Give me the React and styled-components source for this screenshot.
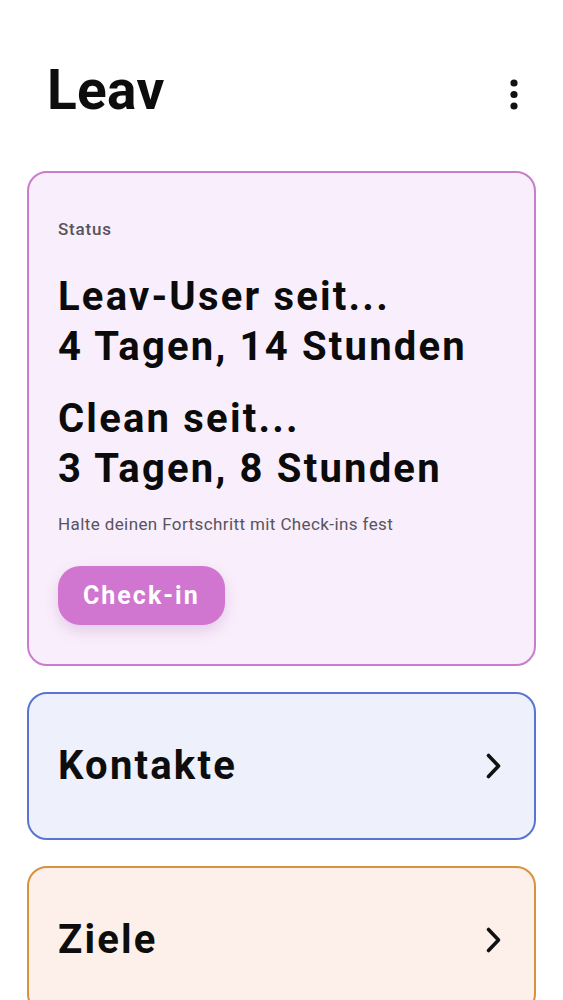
import styled, { createGlobalStyle } from "styled-components";

const GlobalStyle = createGlobalStyle`
  * {
    box-sizing: border-box;
  }
  body {
    margin: 0;
    background: #ffffff;
    font-family: Roboto, "Noto Sans", sans-serif;
    color: #0d0d0d;
  }
`;

const sections = [
  { title: "Kontakte", border: "#5a74d2", bg: "#eef0fc" },
  { title: "Ziele", border: "#d8923f", bg: "#fdf0ea" },
];

const App = () => {
  return (
    <Page>
      <GlobalStyle />
      <Header>
        <Title>Leav</Title>
        <MenuButton aria-label="Menü">
          <svg width="10" height="32" viewBox="0 0 10 32">
            <circle cx="5" cy="5" r="3.6" fill="#111" />
            <circle cx="5" cy="16.5" r="3.6" fill="#111" />
            <circle cx="5" cy="28" r="3.6" fill="#111" />
          </svg>
        </MenuButton>
      </Header>

      <Cards>
        <StatusCard>
          <Label>Status</Label>
          <Headline>
            Leav-User seit...
            <br />
            4 Tagen, 14 Stunden
          </Headline>
          <Headline $second>
            Clean seit...
            <br />
            3 Tagen, 8 Stunden
          </Headline>
          <Hint>Halte deinen Fortschritt mit Check-ins fest</Hint>
          <CheckIn>Check-in</CheckIn>
        </StatusCard>

        {sections.map((s) => (
          <NavCard key={s.title} $border={s.border} $bg={s.bg}>
            <NavTitle>{s.title}</NavTitle>
            <svg width="18" height="28" viewBox="0 0 18 28">
              <path
                d="M3.5 3.5 L13.5 14 L3.5 24.5"
                fill="none"
                stroke="#111"
                strokeWidth="3.6"
                strokeLinecap="round"
                strokeLinejoin="round"
              />
            </svg>
          </NavCard>
        ))}
      </Cards>
    </Page>
  );
};

const Page = styled.div`
  padding: 0 27px;
  height: 1000px;
  overflow: hidden;
`;

const Header = styled.div`
  display: flex;
  justify-content: space-between;
  align-items: flex-start;
  padding: 58px 17px 0 20px;
  height: 171px;
`;

const Title = styled.h1`
  margin: 0;
  font-size: 55px;
  line-height: 64px;
  font-weight: 700;
  letter-spacing: 0.3px;
`;

const MenuButton = styled.div`
  display: flex;
  padding-top: 20px;
`;

const Cards = styled.div`
  display: flex;
  flex-direction: column;
  gap: 26px;
`;

const StatusCard = styled.div`
  display: flex;
  flex-direction: column;
  align-items: flex-start;
  border: 2px solid #c97dcc;
  background: #f9eefb;
  border-radius: 20px;
  padding: 46px 29px 39px;
`;

const Label = styled.div`
  font-size: 17px;
  line-height: 20px;
  font-weight: 500;
  color: #57545c;
  letter-spacing: 0.8px;
`;

const Headline = styled.div`
  margin-top: ${(p) => (p.$second ? "22px" : "33px")};
  font-size: 40px;
  line-height: 50px;
  font-weight: 700;
  letter-spacing: 2.2px;
  color: #0b0b0b;
`;

const Hint = styled.div`
  margin-top: 18px;
  font-size: 17px;
  line-height: 24px;
  color: #57545c;
  letter-spacing: 0.4px;
`;

const CheckIn = styled.button`
  margin-top: 30px;
  height: 59px;
  padding: 0 25px;
  border: none;
  border-radius: 22px;
  background: #d075d0;
  color: #ffffff;
  font-family: Roboto, sans-serif;
  font-size: 25px;
  font-weight: 700;
  letter-spacing: 2px;
  box-shadow: 0 6px 14px rgba(160, 80, 170, 0.22);
`;

const NavCard = styled.div`
  display: flex;
  align-items: center;
  justify-content: space-between;
  height: 148px;
  flex-shrink: 0;
  border: 2px solid ${(p) => p.$border};
  background: ${(p) => p.$bg};
  border-radius: 20px;
  padding: 0 31px 0 29px;
`;

const NavTitle = styled.div`
  font-size: 40px;
  line-height: 50px;
  font-weight: 700;
  letter-spacing: 2.2px;
`;

export default App;
